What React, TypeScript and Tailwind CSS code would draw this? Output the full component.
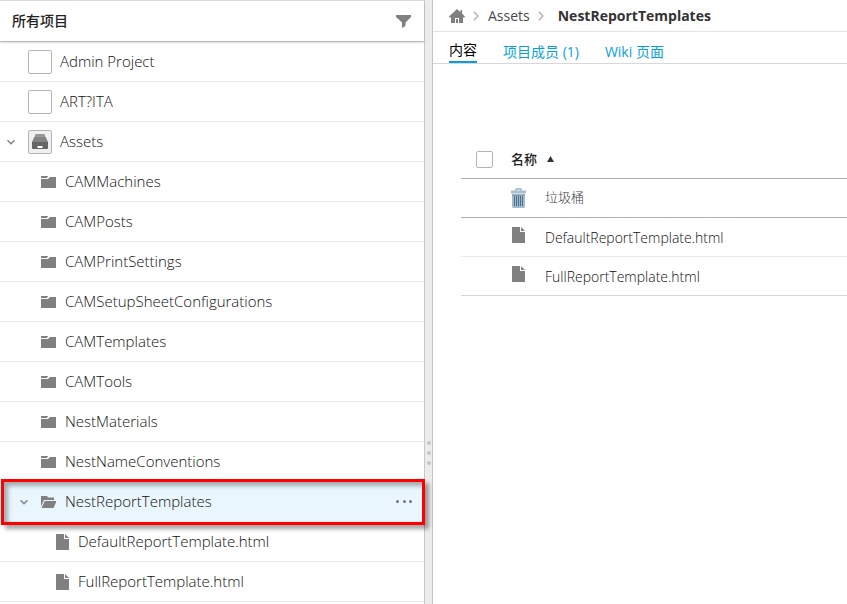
import type { ReactNode } from "react";

const folders = [
  "CAMMachines",
  "CAMPosts",
  "CAMPrintSettings",
  "CAMSetupSheetConfigurations",
  "CAMTemplates",
  "CAMTools",
  "NestMaterials",
  "NestNameConventions",
];

const files = ["DefaultReportTemplate.html", "FullReportTemplate.html"];

const FolderIcon = () => (
  <svg className="w-4 h-3 shrink-0" viewBox="0 0 16 12" fill="#808080">
    <path d="M1 0h7l-1 2H1zM1 3h7l2-2h6v11H1z" />
  </svg>
);

const OpenFolderIcon = () => (
  <svg className="w-4 h-3 shrink-0" viewBox="0 0 16 12" fill="#808080">
    <path d="M1 0h6l1 1.500h6V4H4L1 10.500z" />
    <path d="M4.800 5H16.500L13.500 12H1.500z" />
  </svg>
);

const FileIcon = () => (
  <svg className="w-[13px] h-4 shrink-0" viewBox="0 0 13 16" fill="#808080">
    <path d="M0 0h8v5h5v11H0z" />
    <path d="M9 0l4 4H9z" />
  </svg>
);

const ChevronDown = () => (
  <svg className="w-2 h-2 shrink-0" viewBox="0 0 8 8" fill="none" stroke="#808080" strokeWidth="1.400">
    <path d="M.5 2.200L4 5.700l3.500-3.500" />
  </svg>
);

const ChevronRight = () => (
  <svg className="w-[6px] h-[10px] shrink-0" viewBox="0 0 6 10" fill="none" stroke="#b4b4b4" strokeWidth="1.500">
    <path d="M.8.8L5 5 .8 9.200" />
  </svg>
);

const FilterIcon = () => (
  <svg className="w-4 h-[14px]" viewBox="0 0 16 14" fill="#808080">
    <path d="M0 1h15v2L9.500 8.500V12L6 14V8.500L0 3z" />
  </svg>
);

const HomeIcon = () => (
  <svg className="w-4 h-[14px]" viewBox="0 0 16 14" fill="#808080">
    <path d="M8 0l3.500 3.200V1H13v3.600l3 2.800L15.200 8.500H14V14H10V9H6v5H2V8.500H.8L0 7.400z" />
    <path d="M7 10h2v4H7z" />
  </svg>
);

const DrawerIcon = () => (
  <svg className="w-4 h-[15px]" viewBox="0 0 16 15">
    <path d="M3.500 0h9l1 3h-11z" fill="#999" />
    <path d="M2.300 3h11.400L16 8H0z" fill="#858585" />
    <path d="M0 8h16v6a1 1 0 0 1-1 1H1a1 1 0 0 1-1-1z" fill="#666" />
    <path d="M5.500 12h5v2h-5z" fill="#fff" />
  </svg>
);

const TrashIcon = () => (
  <svg className="w-[15px] h-5" viewBox="0 0 15 20">
    <path d="M5 3V1h5v2" fill="none" stroke="#9bb4c7" strokeWidth="1.300" />
    <path d="M0 2.500h15v3H0z" fill="#a9bfce" />
    <path d="M1 6.500h13V19l-1 1H2l-1-1z" fill="#a3bccd" />
    <path d="M1 6.500h13v1H1z" fill="#6b8799" />
    <path d="M3.500 8v10M5.500 8v10M7.500 8v10M9.500 8v10M11.500 8v10" stroke="#4d6e86" strokeWidth="1" />
  </svg>
);

const Avatar = ({ children }: { children?: ReactNode }) => (
  <span
    className={`flex w-6 h-6 shrink-0 items-center justify-center rounded-xs border border-[#b4b4b4] ${
      children ? "bg-[#f0f0f0]" : "bg-white"
    }`}
  >
    {children}
  </span>
);

const Row = ({ children, className = "" }: { children: ReactNode; className?: string }) => (
  <li>
    <button
      type="button"
      className={`flex w-full h-10 items-center border-b border-[#ebebeb] text-left ${className}`}
    >
      {children}
    </button>
  </li>
);

const Sidebar = () => (
  <aside className="w-[425px] shrink-0 border-t border-r border-t-[#e0e0e0] border-r-[#c8c8c8]">
    <div className="flex h-[41px] items-center justify-between border-b border-[#b8b8b8] pl-3 pr-3 shadow-sm">
      <h2 className="pb-0.5 font-medium text-[#222]">所有项目</h2>
      <button type="button" aria-label="筛选">
        <FilterIcon />
      </button>
    </div>
    <ul className="text-[15px] font-light text-[#111]">
      <Row className="pl-7 gap-2">
        <Avatar />
        Admin Project
      </Row>
      <Row className="pl-7 gap-2">
        <Avatar />
        ART?ITA
      </Row>
      <Row className="pl-[7px] gap-2">
        <ChevronDown />
        <span className="flex items-center gap-2 pl-[5px]">
          <Avatar>
            <DrawerIcon />
          </Avatar>
          Assets
        </span>
      </Row>
      {folders.map((name) => (
        <Row key={name} className="pl-10 gap-[9px]">
          <FolderIcon />
          {name}
        </Row>
      ))}
      <li className="relative flex h-10 items-center border-b border-[#ebebeb] bg-[#eaf6fd] pl-5 pr-3">
        <button type="button" className="flex h-full grow items-center text-left">
          <ChevronDown />
          <span className="flex items-center gap-[9px] pl-3">
            <OpenFolderIcon />
            NestReportTemplates
          </span>
        </button>
        <button type="button" aria-label="更多" className="flex w-4 h-4 items-center justify-between">
          <span className="w-[3px] h-[3px] rounded-full bg-[#777]" />
          <span className="w-[3px] h-[3px] rounded-full bg-[#777]" />
          <span className="w-[3px] h-[3px] rounded-full bg-[#777]" />
        </button>
        {/* Highlight frame */}
        <div className="pointer-events-none absolute z-10 left-px -right-px -top-[3px] -bottom-1 border-[3px] border-[#fe0000] shadow-[4px_4px_4px_rgba(0,0,0,0.35),inset_4px_4px_4px_rgba(0,0,0,0.3)]" />
      </li>
      {files.map((name) => (
        <Row key={name} className="pl-14 gap-[9px]">
          <FileIcon />
          {name}
        </Row>
      ))}
    </ul>
  </aside>
);

const Splitter = () => (
  <div className="flex w-2 shrink-0 flex-col items-center gap-[6px] border-r border-[#c4c4c4] bg-[#ececec] pt-[441px]">
    <span className="w-1 h-1 rounded-full bg-[#c4c4c4]" />
    <span className="w-1 h-1 rounded-full bg-[#c4c4c4]" />
    <span className="w-1 h-1 rounded-full bg-[#c4c4c4]" />
  </div>
);

const Content = () => (
  <main className="min-w-0 grow">
    <nav className="flex h-8 items-center border-b border-[#e4e4e4] pl-4">
      <a href="#home" aria-label="主页">
        <HomeIcon />
      </a>
      <span className="pl-2 pr-[9px]">
        <ChevronRight />
      </span>
      <a href="#assets">Assets</a>
      <span className="pl-2 pr-[14px]">
        <ChevronRight />
      </span>
      <h1 className="font-bold text-[#333]">NestReportTemplates</h1>
    </nav>
    <nav className="flex h-8 items-end gap-[26px] border-b border-[#d8d8d8] pl-4 leading-[22px] text-[#0a9fdb]">
      <a href="#content" className="border-b-2 border-[#0a9fdb] text-black">
        内容
      </a>
      <a href="#members">项目成员 (1)</a>
      <a href="#wiki">Wiki 页面</a>
    </nav>
    <div className="pl-7 pt-[75px]">
      <table className="w-full border-collapse text-left text-[13px]">
        <thead>
          <tr className="h-[39px] border-b border-[#b0b0b0]">
            <th className="w-[50px] pl-[15px] pt-0.5">
              <input
                type="checkbox"
                aria-label="全选"
                className="block w-[17px] h-[17px] appearance-none rounded-xs border border-[#b4b4b4] bg-white"
              />
            </th>
            <th colSpan={2} className="pt-0.5 font-medium text-[#222]">
              <button type="button" className="flex items-center gap-[10px]">
                名称
                <svg className="w-[7px] h-[6px]" viewBox="0 0 7 6" fill="#333">
                  <path d="M3.500 0L7 6H0z" />
                </svg>
              </button>
            </th>
          </tr>
        </thead>
        <tbody>
          <tr className="h-[39px] border-b border-[#b0b0b0]">
            <td />
            <td className="w-[33px]">
              <TrashIcon />
            </td>
            <td className="font-light text-[#444]">垃圾桶</td>
          </tr>
          {files.map((name) => (
            <tr key={name} className="h-[39px] border-b border-[#ebebeb] last:border-[#d8d8d8]">
              <td />
              <td className="w-[34px] pl-px pb-1">
                <FileIcon />
              </td>
              <td className="pt-0.5 text-[14px] font-light text-[#111]">{name}</td>
            </tr>
          ))}
        </tbody>
      </table>
    </div>
  </main>
);

const App = () => {
  return (
    <div className="flex h-screen overflow-hidden bg-white font-['Open_Sans','Noto_Sans_CJK_SC',sans-serif] text-[14px] text-[#484848]">
      <Sidebar />
      <Splitter />
      <Content />
    </div>
  );
};

export default App;
